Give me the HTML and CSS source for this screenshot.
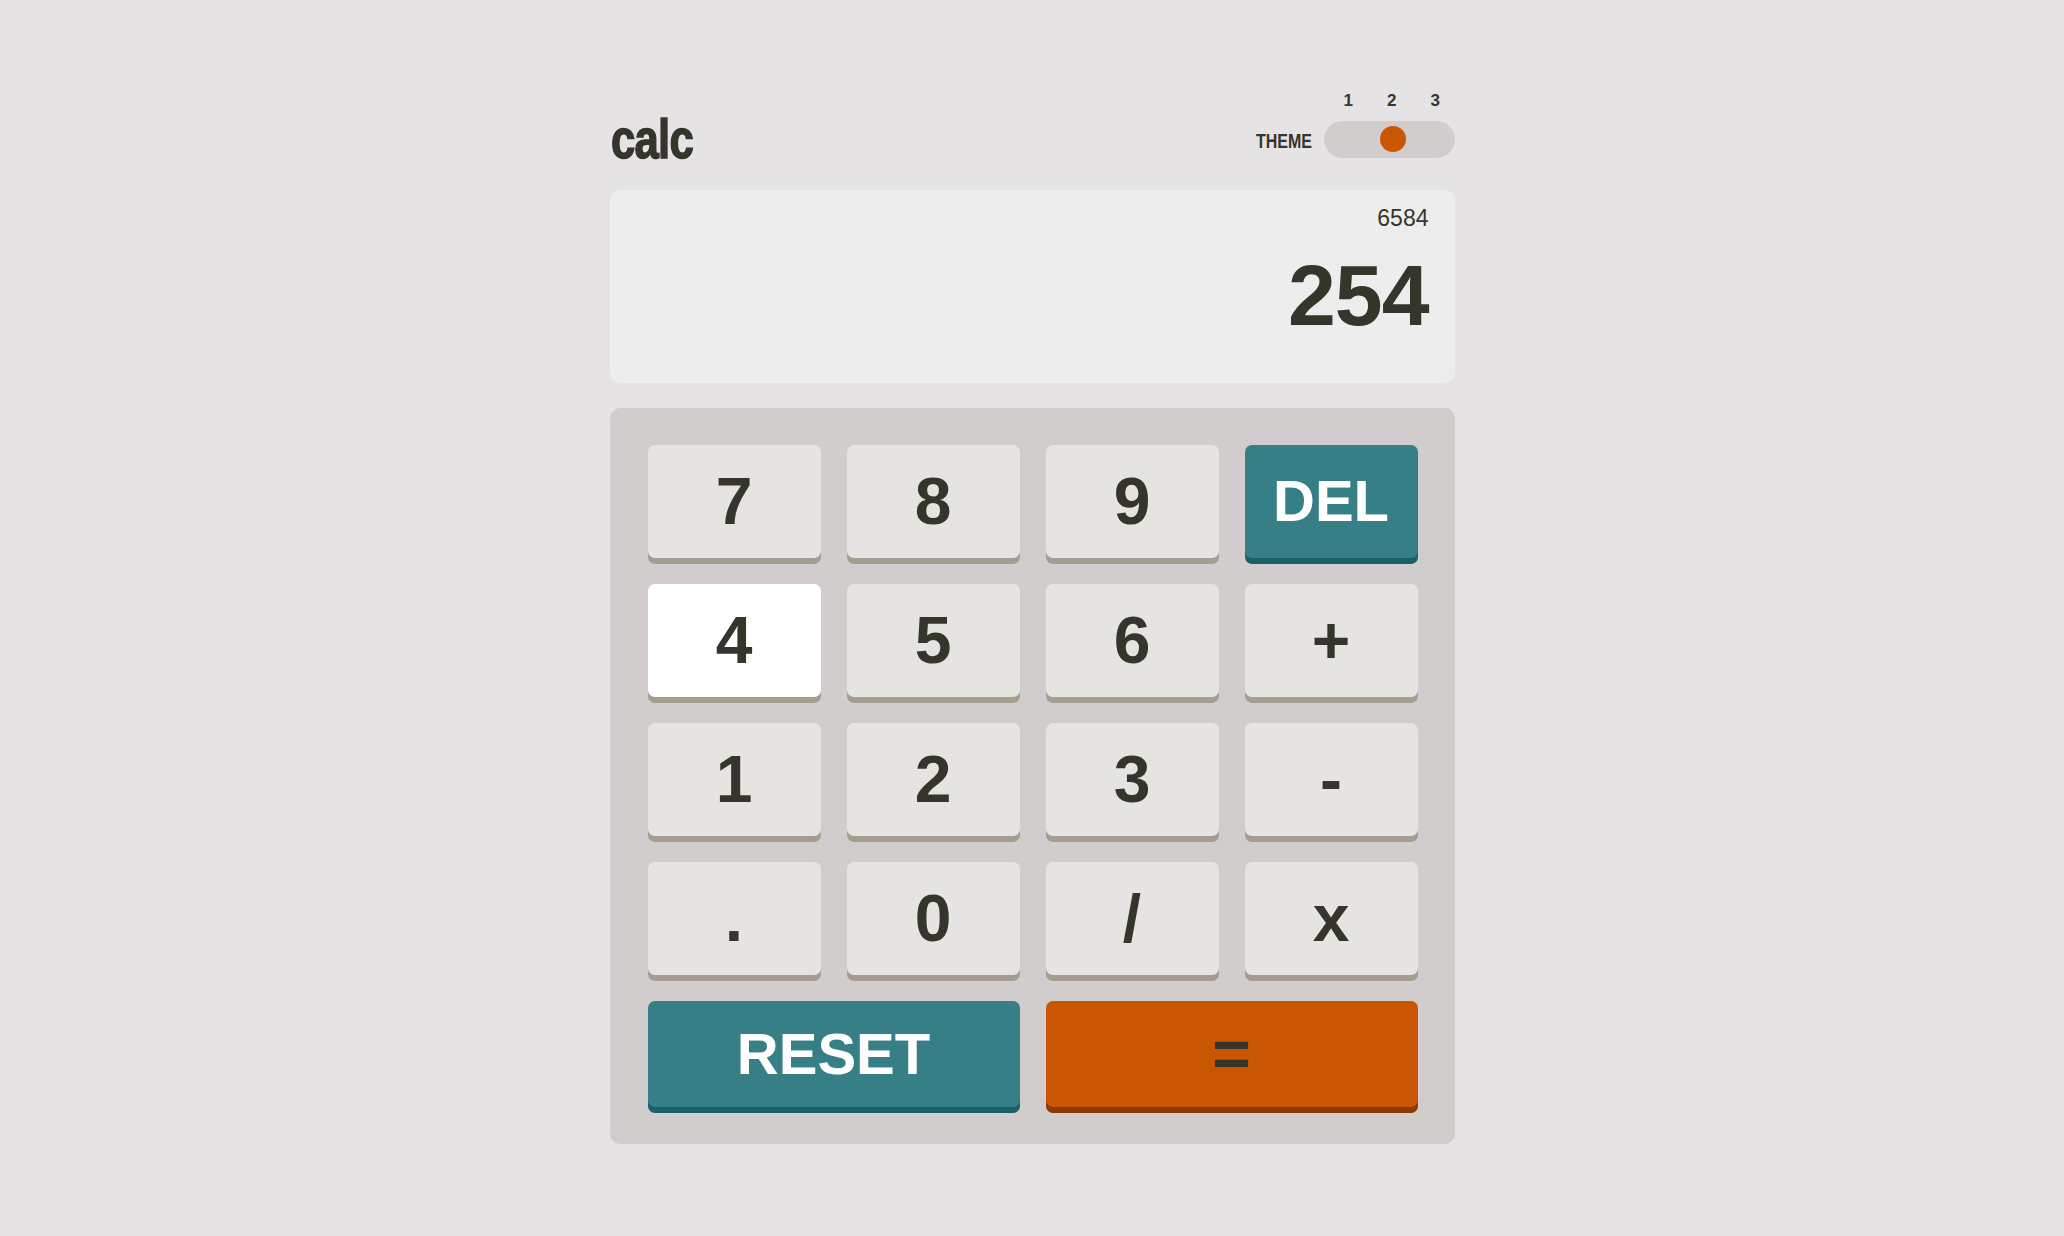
FILE: index.html
```html
<!DOCTYPE html>
<html lang="en">
<head>
<meta charset="utf-8">
<title>calc</title>
<link rel="stylesheet" href="styles.css">
</head>
<body>
<main class="calculator">
  <header class="header">
    <h1 class="logo">calc</h1>
    <div class="theme">
      <div class="theme-numbers"><span>1</span><span>2</span><span>3</span></div>
      <span class="theme-label">THEME</span>
      <div class="toggle"><span class="knob"></span></div>
    </div>
  </header>
  <section class="screen">
    <div class="previous">6584</div>
    <div class="current">254</div>
  </section>
  <section class="keypad">
    <button class="key">7</button>
    <button class="key">8</button>
    <button class="key">9</button>
    <button class="key key-blue key-word">DEL</button>
    <button class="key key-hover">4</button>
    <button class="key">5</button>
    <button class="key">6</button>
    <button class="key">+</button>
    <button class="key">1</button>
    <button class="key">2</button>
    <button class="key">3</button>
    <button class="key">-</button>
    <button class="key">.</button>
    <button class="key">0</button>
    <button class="key">/</button>
    <button class="key">x</button>
    <button class="key key-wide key-blue key-word">RESET</button>
    <button class="key key-wide key-orange">=</button>
  </section>
</main>
</body>
</html>
```

FILE: styles.css
```css
* { box-sizing: border-box; }
html, body { margin: 0; padding: 0; }
body {
  background: #e5e3e4;
  color: #35352c;
  font-family: "Liberation Sans", Arial, sans-serif;
  min-height: 100vh;
  display: flex;
  justify-content: center;
  align-items: center;
}
.calculator {
  width: 845px;
  display: flex;
  flex-direction: column;
}
.header {
  display: flex;
  justify-content: space-between;
  align-items: flex-end;
  height: 65px;
  margin-bottom: 32px;
}
.logo {
  margin: 0 0 -9px 1px;
  font-family: "Liberation Sans", Arial, sans-serif;
  font-weight: 700;
  font-size: 56px;
  line-height: 56px;
  letter-spacing: -1px;
  -webkit-text-stroke: 1.5px #35352c;
  transform: scaleX(0.78);
  transform-origin: left center;
}
.theme {
  display: grid;
  grid-template-columns: auto 131px;
  grid-template-rows: 16px 37px;
  column-gap: 12px;
  row-gap: 12px;
  align-items: center;
}
.theme-numbers {
  grid-column: 2;
  grid-row: 1;
  display: grid;
  grid-template-columns: repeat(3, 43.5px);
  padding-left: 3px;
  font-weight: 700;
  font-size: 17px;
  line-height: 16px;
  text-align: center;
}
.theme-label {
  grid-column: 1;
  grid-row: 2;
  font-weight: 700;
  font-size: 20px;
  line-height: 20px;
  padding-top: 3px;
  transform: scaleX(0.8);
  transform-origin: right center;
}
.toggle {
  grid-column: 2;
  grid-row: 2;
  height: 37px;
  border-radius: 19px;
  background: #d2cdcd;
  display: flex;
  align-items: center;
}
.knob {
  width: 26px;
  height: 26px;
  border-radius: 50%;
  background: #ca5502;
  margin-left: 56px;
}
.screen {
  height: 193px;
  border-radius: 10px;
  background: #ededed;
  display: flex;
  flex-direction: column;
  align-items: flex-end;
  padding: 17px 26px 0;
  margin-bottom: 25px;
}
.previous {
  font-size: 23px;
  line-height: 22px;
}
.current {
  margin-top: 23px;
  font-weight: 700;
  font-size: 86px;
  line-height: 86px;
  letter-spacing: -1px;
}
.keypad {
  background: #d2cdcd;
  border-radius: 10px;
  padding: 37px 38px;
  display: grid;
  grid-template-columns: repeat(4, 173px);
  grid-template-rows: repeat(4, 113px) 106px;
  column-gap: 26px;
  row-gap: 26px;
}
.key {
  border: 0;
  margin: 0;
  padding: 0;
  border-radius: 7px;
  background: #e5e4e1;
  box-shadow: 0 6px 0 #a69d91;
  color: #35352c;
  font-family: "Liberation Sans", Arial, sans-serif;
  font-weight: 700;
  font-size: 66px;
  line-height: 1;
  display: flex;
  align-items: center;
  justify-content: center;
}
.key-hover { background: #ffffff; }
.key-word { font-size: 58px; }
.key-blue {
  background: #377f86;
  box-shadow: 0 6px 0 #1b6066;
  color: #ffffff;
}
.key-orange {
  background: #ca5502;
  box-shadow: 0 6px 0 #893901;
  color: #35352c;
}
.key-wide { grid-column: span 2; }
```
